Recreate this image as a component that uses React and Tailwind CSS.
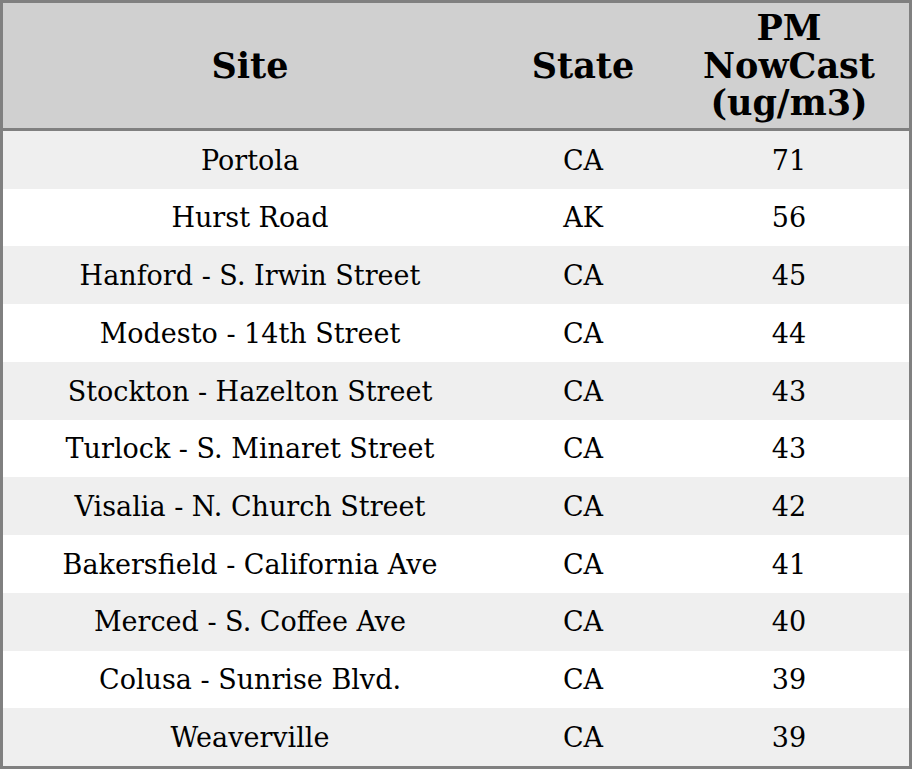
const rows = [
  ["Portola", "CA", "71"],
  ["Hurst Road", "AK", "56"],
  ["Hanford - S. Irwin Street", "CA", "45"],
  ["Modesto - 14th Street", "CA", "44"],
  ["Stockton - Hazelton Street", "CA", "43"],
  ["Turlock - S. Minaret Street", "CA", "43"],
  ["Visalia - N. Church Street", "CA", "42"],
  ["Bakersfield - California Ave", "CA", "41"],
  ["Merced - S. Coffee Ave", "CA", "40"],
  ["Colusa - Sunrise Blvd.", "CA", "39"],
  ["Weaverville", "CA", "39"],
];

export default function App() {
  return (
    <div className="w-[912px] h-[769px] border-[3px] border-[#808080] flex flex-col text-black font-['DejaVu_Serif',serif]">
      <div className="h-[128px] shrink-0 flex items-center bg-[#d0d0d0] border-b-[3px] border-[#808080] font-bold text-[35px] leading-[37.5px] text-center">
        <div className="w-[494px]">Site</div>
        <div className="w-[172px]">State</div>
        <div className="flex-1">PM<br />NowCast<br />(ug/m3)</div>
      </div>
      {rows.map((r, i) => (
        <div key={i} className={`flex-1 flex items-center pt-[2px] text-[27px] text-center ${i % 2 === 0 ? "bg-[#efefef]" : "bg-white"}`}>
          <div className="w-[494px]">{r[0]}</div>
          <div className="w-[172px]">{r[1]}</div>
          <div className="flex-1">{r[2]}</div>
        </div>
      ))}
    </div>
  );
}
